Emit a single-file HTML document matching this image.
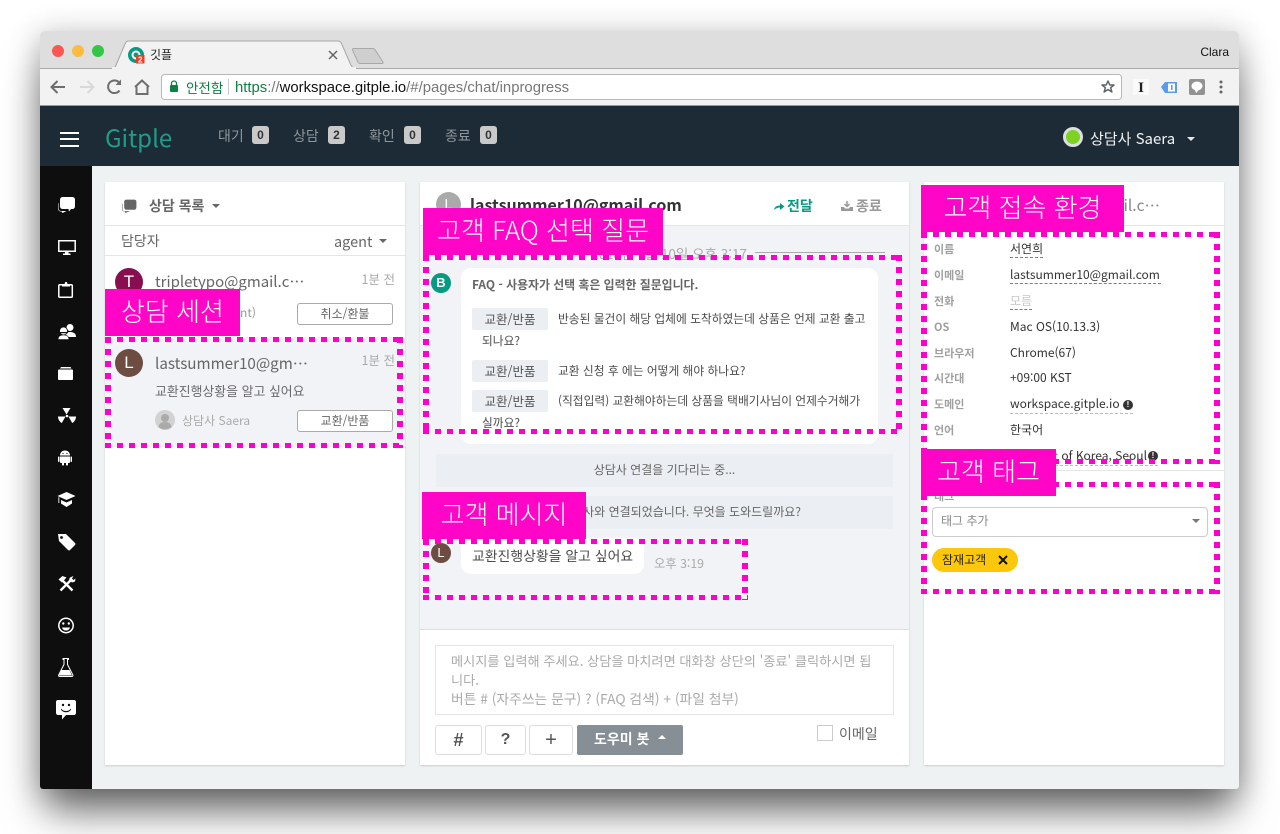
<!DOCTYPE html>
<html lang="ko"><head><meta charset="utf-8"><title>깃플</title>
<style>
html,body{margin:0;padding:0;width:1280px;height:834px;overflow:hidden;background:#fff}
body{position:relative;font-family:"Noto Sans CJK KR","Liberation Sans",sans-serif;color:#555}
.a,.t,svg.a{position:absolute}
.t{white-space:nowrap;height:20px;line-height:20px;font-size:12px}
.c{text-align:center}
.win{position:absolute;left:40px;top:31px;width:1199px;height:758px;border-radius:5px 5px 3px 3px;background:#eef2f3;box-shadow:0 28px 38px -6px rgba(0,0,0,.55),0 4px 30px 2px rgba(0,0,0,.22)}
.panel{position:absolute;top:182px;height:583px;background:#fff;box-shadow:0 1px 2px rgba(0,0,0,.16)}
.bd{position:absolute;background:#e3e5e7;height:1px}
.badge{position:absolute;top:126px;width:17px;height:18px;border-radius:3px;background:#c9c9c9;color:#333;font:700 12px/18px "Liberation Sans",sans-serif;text-align:center}
.nav{color:#90979c;font-size:14px}
.btn{position:absolute;box-sizing:border-box;background:#fff;border:1px solid #aaa;border-radius:3px;font-size:12px;text-align:center;color:#666;width:96px;height:22px;left:297px;line-height:19px}
.chip{position:absolute;left:472px;width:76px;height:22px;background:#ebeef2;border-radius:2px;font-size:12.500px;line-height:22px;text-align:center;color:#555}
.f{font-size:11.750px;color:#4c4c4c}
.sys{position:absolute;left:436px;width:457px;height:33px;background:#ebeef2;font-size:12px;line-height:32px;text-align:center;color:#666}
.av{position:absolute;border-radius:50%;color:#fff;text-align:center;font-family:"Liberation Sans",sans-serif}
.k{left:934px;font-weight:700;color:#a0a0a0;font-size:11px}
.v{left:1010px;color:#333}
.u{position:absolute;left:1010px;height:0;border-bottom:1px dashed #3b8dd6}
.tb{position:absolute;box-sizing:border-box;top:725px;height:30px;border:1px solid #ddd;border-radius:3px;background:#fff;text-align:center;color:#555;font:700 16px/28px "Liberation Sans",sans-serif}
.d{position:absolute;z-index:5;background:
repeating-linear-gradient(90deg,#f0c 0 6px,transparent 6px 12px) left top/100% 5px no-repeat,
repeating-linear-gradient(90deg,#f0c 0 6px,transparent 6px 12px) left bottom/100% 5px no-repeat,
repeating-linear-gradient(180deg,#f0c 0 6px,transparent 6px 12px) left top/6px 100% no-repeat,
repeating-linear-gradient(180deg,#f0c 0 6px,transparent 6px 12px) right top/6px 100% no-repeat}
.l{position:absolute;z-index:6;height:47px;background:#ff05c8;color:#fff;font-size:26px;line-height:44px;text-align:center;font-weight:300;white-space:nowrap}
</style></head><body>
<div class="win"></div>

<!-- Browser chrome -->
<div class="a" style="left:40px;top:31px;width:1199px;height:38px;background:#dedede;border-radius:5px 5px 0 0;border-bottom:1px solid #a9a9a9;box-sizing:border-box"></div>
<div class="a" style="left:40px;top:69px;width:1199px;height:37px;background:#f2f2f2;border-bottom:1px solid #9a9a9a;box-sizing:border-box"></div>
<svg class="a" style="left:0;top:0" width="1280" height="110" viewBox="0 0 1280 110">
<circle cx="58" cy="51" r="6" fill="#fc5753"/><circle cx="78" cy="51" r="6" fill="#fdbc40"/><circle cx="98" cy="51" r="6" fill="#33c748"/>
<path d="M112 68.500c2 0 3-1 3.700-2.500L125 44c.7-2 1.500-3 3.500-3H338c2 0 3 1 3.700 3L350 63c1 3 3 5.500 6 5.500" fill="#f2f2f2" stroke="#a5a5a5"/>
<rect x="112" y="67" width="244" height="3" fill="#f2f2f2"/>
<path d="M354 48.500h19c1 0 1.500.5 2 1.200l8 12.300c.5.800 0 1.500-1 1.500h-22c-1 0-1.500-.4-2-1.200l-5.500-12.300c-.4-.9 0-1.500 1.500-1.500z" fill="#cfcfcf" stroke="#a9a9a9"/>
<circle cx="136" cy="55" r="8" fill="#079a82"/><circle cx="136" cy="55" r="3.500" fill="none" stroke="#fff" stroke-width="2"/>
<rect x="136" y="55" width="8.500" height="8.500" fill="#e8402a"/><text x="140.200" y="62.500" font-family="Liberation Sans" font-size="8" font-weight="700" fill="#fff" text-anchor="middle">2</text>
<path d="M329 51l8 8m0-8l-8 8" stroke="#666" stroke-width="1.500" fill="none"/>
<g fill="none" stroke="#6e6e6e" stroke-width="2"><path d="M65 87H52m5.500-6l-6 6 6 6"/>
<path d="M80 87h13m-5.500-6l6 6-6 6" stroke="#d9d9d9"/>
<path d="M119.500 90.500a6.300 6.300 0 1 1 .6-6.500"/><path d="M121 79.500v5.500h-5.500z" fill="#6e6e6e" stroke="none"/>
<path d="M135 87l7-6.500 7 6.500m-12.500-.5V94h11v-7.500" /></g>
<rect x="161.500" y="74.500" width="960" height="25" rx="3" fill="#fff" stroke="#b8b8b8"/>
<rect x="170" y="85" width="8" height="7" rx="1" fill="#0b8043"/><path d="M171.500 85v-1.500a2.500 2.500 0 0 1 5 0V85" fill="none" stroke="#0b8043" stroke-width="1.300"/>
<rect x="228" y="79" width="1" height="16" fill="#c8c8c8"/>
<path d="M1108 81l1.800 4h4.200l-3.400 2.700 1.300 4.300-3.900-2.500-3.900 2.500 1.300-4.300-3.400-2.700h4.200z" fill="none" stroke="#5f6368" stroke-width="1.500" stroke-linejoin="round"/>
<rect x="1133" y="79" width="16" height="16" fill="#fafafa"/>
<text x="1141" y="92" font-family="Liberation Serif" font-size="15" font-weight="700" fill="#222" text-anchor="middle">I</text>
<path d="M1161 87l4-5h12v11h-12z" fill="#5a9bf0"/><rect x="1168" y="83.500" width="7" height="8" fill="#fff"/><rect x="1171" y="85" width="1.500" height="5" fill="#5a9bf0"/>
<rect x="1189" y="79" width="16" height="16" rx="2" fill="#929292"/><ellipse cx="1197" cy="86" rx="5.500" ry="4.500" fill="#fff"/><path d="M1195 90l1 3 3-3z" fill="#fff"/>
<g fill="#666"><circle cx="1221" cy="82" r="1.500"/><circle cx="1221" cy="87" r="1.500"/><circle cx="1221" cy="92" r="1.500"/></g>
</svg>
<div class="t" style="left:150px;top:45px;font-size:12px;color:#222">깃플</div>
<div class="t" style="right:51px;top:42px;font:12px/20px 'Liberation Sans',sans-serif;color:#111">Clara</div>
<div class="t" style="left:186px;top:77px;font-size:13.500px;color:#0b8043">안전함</div>
<div class="t" style="left:235px;top:78px;font:14.880px/20px 'Liberation Sans',sans-serif;color:#777"><span style="color:#0b8043">https</span>://<span style="color:#111">workspace.gitple.io</span>/#/pages/chat/inprogress</div>

<!-- App header -->
<div class="a" style="left:40px;top:106px;width:1199px;height:60px;background:#1c2b36"></div>
<div class="a" style="left:60px;top:132px;width:19px;height:2px;background:#fff"></div>
<div class="a" style="left:60px;top:138px;width:19px;height:2px;background:#fff"></div>
<div class="a" style="left:60px;top:145px;width:19px;height:2px;background:#fff"></div>
<div class="t" style="left:105px;top:122px;height:30px;line-height:30px;font-size:24px;color:#1f9c8a;font-weight:400">Gitple</div>
<div class="t nav" style="left:218px;top:126px">대기</div><div class="badge" style="left:252px">0</div>
<div class="t nav" style="left:293px;top:126px">상담</div><div class="badge" style="left:328px">2</div>
<div class="t nav" style="left:369px;top:126px">확인</div><div class="badge" style="left:404px">0</div>
<div class="t nav" style="left:445px;top:126px">종료</div><div class="badge" style="left:480px">0</div>
<div class="a" style="left:1063px;top:127px;width:20px;height:20px;box-sizing:border-box;border-radius:50%;background:#7ed321;border:3px solid #dcdfe0"></div>
<div class="t" style="left:1090px;top:129px;font-size:15px;color:#f2f2f2">상담사 Saera</div>
<div class="a" style="left:1187px;top:137px;border:4px solid transparent;border-top:4px solid #e8e8e8"></div>

<!-- Sidebar -->
<div class="a" style="left:40px;top:166px;width:52px;height:623px;background:#0e0e0e;border-radius:0 0 0 3px"></div>
<svg class="a" style="left:40px;top:166px" width="52" height="623" viewBox="0 0 52 623" fill="#fff">
<path d="M23 31h9c2 0 3 1 3 3v6c0 2-1 3-3 3h-1l-2 2.500-.5-2.500H23c-2 0-3-1-3-3v-6c0-2 1-3 3-3z"/><path d="M18.500 37v5c0 2 1 3 3 3h5l-4 2-1-1.500c-2 0-3.500-1-3.500-3v-4c0-1 0-1.500.5-1.500z"/>
<path d="M18.800 74.800h16.400v10.400H18.800z" fill="none" stroke="#fff" stroke-width="1.500"/><path d="M25 86h3.500v1.500h2V89h-7.500v-1.500h2z"/>
<rect x="18.800" y="118.800" width="13.500" height="12.500" rx="1" fill="none" stroke="#fff" stroke-width="1.500"/><path d="M22 118h2.500l.8-2h1.500l.8 2H30v2.500h-8z"/>
<circle cx="30" cy="161.500" r="3.500"/><path d="M25 171c0-4 2-5 5-5s6 1 6 5z"/><circle cx="23.500" cy="165" r="4" stroke="#0e0e0e" stroke-width=".8"/><path d="M19 166h9v1.200h-9z" fill="#0e0e0e"/><path d="M18 173.500c0-3.500 2.500-4.500 5.500-4.500s5.500 1 5.500 4.500z" stroke="#0e0e0e" stroke-width=".6"/>
<path d="M21 201h9.500l1 1.500H20z"/><path d="M19 203.500h13c.6 0 1 .4 1 1v8.500c0 .6-.4 1-1 1H19c-.6 0-1-.4-1-1v-8.500c0-.6.4-1 1-1z"/>
<path d="M22.500 242h8l-4 6.500z"/><path d="M18 250.500h7.500l-3.700 6.500c-2.300-1.300-3.800-3.700-3.800-6.500z"/><path d="M36 250.500h-7.500l3.700 6.500c2.300-1.300 3.800-3.700 3.800-6.500z"/><circle cx="27" cy="250" r="1.300"/>
<path d="M20 289.500c0-3 2.200-5 5-5s5 2 5 5z"/><path d="M20 290.500h10v5.500c0 .6-.4 1-1 1h-8c-.6 0-1-.4-1-1z"/><rect x="18" y="290.500" width="1.500" height="5.500" rx=".7"/><rect x="30.500" y="290.500" width="1.500" height="5.500" rx=".7"/><rect x="22" y="296" width="2" height="3.500" rx=".8"/><rect x="26" y="296" width="2" height="3.500" rx=".8"/><circle cx="23" cy="287.500" r=".6" fill="#0e0e0e"/><circle cx="27" cy="287.500" r=".6" fill="#0e0e0e"/>
<path d="M26.500 326l9 4-9 4-9-4z"/><path d="M21 334v3.500l5.500 3.500 5.500-3.500V334l-5.500 2.500z"/><path d="M18 331l1.500.6V337H18z" fill="#999"/>
<path d="M18 368h8l9 9c.6.6.6 1.300 0 2l-5 5c-.7.6-1.400.6-2 0l-9-9z"/><circle cx="21.500" cy="371.500" r="1.400" fill="#0e0e0e"/>
<path d="M20.500 424.500L32 413M21.500 413.500l11 11" stroke="#fff" stroke-width="2.300" fill="none"/><path d="M18.500 413.500l4-3.500 4 1.500-4.500 5z"/><path d="M30 411.500l3.500-1.500-1.500 2.500 1.500 1.500 2-1.500-.5 3-3 1-3-3z"/>
<circle cx="26" cy="459.500" r="7.200" fill="none" stroke="#fff" stroke-width="1.500"/><circle cx="23.300" cy="457.500" r="1.200"/><circle cx="28.800" cy="457.500" r="1.200"/><path d="M22 461.500h8c-.6 2-2 3-4 3s-3.400-1-4-3z"/>
<path d="M23 492.500h5.500v1h-1v5l5.300 10.300c.4 1 0 1.700-1 1.700H19.700c-1 0-1.400-.7-1-1.700l5.300-10.300v-5h-1z" fill="none" stroke="#fff" stroke-width="1"/><path d="M21.500 504h8l2.500 5.500H19z"/>
<path d="M18 534h16c1 0 2 .8 2 2v11c0 1-1 2-2 2H26l-4 4.500V549h-4c-1 0-2-1-2-2v-11c0-1.200 1-2 2-2z"/><g fill="#0e0e0e"><circle cx="23" cy="539" r="1.200"/><circle cx="29" cy="539" r="1.200"/><path d="M21 542.500c1 1.500 3 2.500 5 2.500s4-1 5-2.500v1.300c-1 1.500-3 2.500-5 2.500s-4-1-5-2.500z"/></g>
</svg>

<!-- Left panel -->
<div class="panel" style="left:105px;width:300px"></div>
<div class="bd" style="left:105px;top:225px;width:300px"></div>
<div class="bd" style="left:105px;top:255px;width:300px"></div>
<svg class="a" style="left:121px;top:198px" width="17" height="16" viewBox="0 0 16 14" fill="#666"><path d="M5 1h7.500c1 0 2 .6 2 2v5c0 1.500-1 2.500-2 2.500H5c-1 0-2-1-2-2.500V3c0-1.400 1-2 2-2z"/><path d="M1.500 4.500V10c0 1.200.8 1.800 2 1.800H9L4 13.500l-.5-1.500C1.500 12 1 11 1 10V5.500z"/></svg>
<div class="t" style="left:149px;top:196px;font-size:14px;font-weight:700;color:#666">상담 목록</div>
<div class="a" style="left:212px;top:204px;border:4px solid transparent;border-top:4px solid #666"></div>
<div class="t" style="left:121px;top:231px;font-size:14px;color:#666">담당자</div>
<div class="t" style="left:334px;top:232px;font-size:14.500px;color:#666">agent</div>
<div class="a" style="left:379px;top:239px;border:4px solid transparent;border-top:4px solid #666"></div>

<div class="av" style="left:115px;top:268px;width:28px;height:28px;background:#880e4f;font-size:17px;line-height:28px">T</div>
<div class="t" style="left:155px;top:272px;font-size:15px;color:#666">tripletypo@gmail.c⋯</div>
<div class="t" style="right:885px;top:269px;color:#aaa;font-size:12.500px">1분 전</div>
<div class="t" style="left:240px;top:303px;color:#999;font-size:12px">nt)</div>
<div class="btn" style="top:303px">취소/환불</div>

<div class="a" style="left:105px;top:337px;width:300px;height:110px;background:#f1f3f7"></div>
<div class="av" style="left:115px;top:349px;width:28px;height:28px;background:#6d4c41;font-size:17px;line-height:28px">L</div>
<div class="t" style="left:155px;top:353px;font-size:15.200px;color:#666">lastsummer10@gm⋯</div>
<div class="t" style="right:885px;top:350px;color:#aaa;font-size:12.500px">1분 전</div>
<div class="t" style="left:155px;top:381px;font-size:12.900px;color:#6a6a6a">교환진행상황을 알고 싶어요</div>
<svg class="a" style="left:155px;top:410px" width="20" height="20"><circle cx="10" cy="10" r="10" fill="#d2d2d2"/><circle cx="10" cy="8" r="4" fill="#aaa"/><path d="M3.500 17c.5-3.500 3-5 6.500-5s6 1.500 6.500 5a10 10 0 0 1-13 0z" fill="#aaa"/></svg>
<div class="t" style="left:182px;top:411px;font-size:12px;color:#aaa">상담사 Saera</div>
<div class="btn" style="top:410px">교환/반품</div>

<!-- Center panel -->
<div class="panel" style="left:420px;width:489px"></div>
<div class="a" style="left:420px;top:226px;width:489px;height:403px;background:#f1f3f7"></div>
<div class="bd" style="left:420px;top:225px;width:489px"></div>
<div class="bd" style="left:420px;top:629px;width:489px;background:#dcdfe2"></div>
<div class="av" style="left:436px;top:192px;width:25px;height:25px;background:#aaa;font-size:15px;line-height:25px">L</div>
<div class="t" style="left:470px;top:194px;font-size:16px;font-weight:700;color:#333">lastsummer10@gmail.com</div>
<svg class="a" style="left:773px;top:201px" width="12" height="10"><path d="M1 9c.5-3 2.500-4.500 6-4.500V2l4.500 3.500L7 9V6.500C4.500 6.500 2.500 7.500 1 9z" fill="#079a82"/></svg>
<div class="t" style="left:787px;top:196px;font-size:14px;font-weight:700;color:#079a82">전달</div>
<svg class="a" style="left:841px;top:200px" width="12" height="12"><path d="M6 1v5M3.500 4L6 6.500 8.500 4" stroke="#999" stroke-width="1.500" fill="none"/><path d="M0 7h3l1 1.500h4L9 7h3v4H0z" fill="#999"/></svg>
<div class="t" style="left:856px;top:196px;font-size:14px;font-weight:700;color:#999">종료</div>
<div class="t" style="right:533px;top:243px;font-size:13.500px;color:#aaa">2018년 7월 10일 오후 3:17</div>
<div class="a" style="left:755px;top:252px;width:130px;height:1px;background:#aaa"></div>

<div class="av" style="left:431px;top:273px;width:20px;height:20px;background:#079a82;font-size:13px;line-height:20px;font-weight:700">B</div>
<div class="a" style="left:461px;top:268px;width:417px;height:176px;background:#fff;border-radius:10px"></div>
<div class="t" style="left:472px;top:275px;font-size:11.900px;font-weight:700;color:#666">FAQ - 사용자가 선택 혹은 입력한 질문입니다.</div>
<div class="chip" style="top:308px">교환/반품</div>
<div class="t f" style="left:558px;top:309px">반송된 물건이 해당 업체에 도착하였는데 상품은 언제 교환 출고</div>
<div class="t f" style="left:482px;top:331px">되나요?</div>
<div class="chip" style="top:360px">교환/반품</div>
<div class="t f" style="left:558px;top:361px">교환 신청 후 에는 어떻게 해야 하나요?</div>
<div class="chip" style="top:390px">교환/반품</div>
<div class="t f" style="left:558px;top:391px">(직접입력) 교환해야하는데 상품을 택배기사님이 언제수거해가</div>
<div class="t f" style="left:482px;top:413px">실까요?</div>

<div class="sys" style="top:454px">상담사 연결을 기다리는 중...</div>
<div class="sys" style="top:496px;text-align:right;padding-right:92px;box-sizing:border-box">상담사와 연결되었습니다. 무엇을 도와드릴까요?</div>

<div class="av" style="left:431px;top:543px;width:20px;height:20px;background:#6d4c41;font-size:13px;line-height:20px">L</div>
<div class="a" style="left:461px;top:538px;width:183px;height:36px;background:#fff;border-radius:10px"></div>
<div class="t" style="left:472px;top:546px;font-size:13.900px;color:#4c4c4c">교환진행상황을 알고 싶어요</div>
<div class="t" style="left:654px;top:553px;font-size:12.300px;color:#aaa">오후 3:19</div>

<div class="a" style="left:435px;top:645px;width:459px;height:70px;box-sizing:border-box;border:1px solid #e6e6e6;background:#fff"></div>
<div class="a" style="left:451px;top:651px;white-space:nowrap;font-size:13.200px;line-height:19px;color:#aaa">메시지를 입력해 주세요. 상담을 마치려면 대화창 상단의 '종료' 클릭하시면 됩<br>니다.<br><span style="font-size:13.800px">버튼 # (자주쓰는 문구) ? (FAQ 검색) + (파일 첨부)</span></div>
<div class="tb" style="left:435px;width:47px;font-size:18px">#</div>
<div class="tb" style="left:485px;width:41px">?</div>
<div class="tb" style="left:529px;width:44px;font-size:20px;font-weight:400">+</div>
<div class="a" style="left:577px;top:725px;width:106px;height:30px;background:#868e96;border-radius:2px;color:#fff;font-size:14px;font-weight:700;line-height:29px;padding-left:17px;box-sizing:border-box;white-space:nowrap">도우미 봇</div>
<div class="a" style="left:658px;top:729px;border:4px solid transparent;border-bottom:4px solid #fff;margin-top:2px"></div>
<div class="a" style="left:817px;top:725px;width:16px;height:16px;box-sizing:border-box;border:1px solid #ccc;background:#fff"></div>
<div class="t" style="left:839px;top:724px;font-size:14px;color:#666">이메일</div>

<!-- Right panel -->
<div class="panel" style="left:924px;width:300px"></div>
<div class="bd" style="left:924px;top:225px;width:300px"></div>
<div class="t" style="left:1030px;top:195px;width:130px;text-align:right;font-size:15.500px;color:#888">il.c⋯</div>
<div class="t k" style="top:239px">이름</div><div class="t v" style="top:239px">서연희</div><div class="u" style="top:257px;width:33px"></div>
<div class="t k" style="top:265px">이메일</div><div class="t v" style="top:265px">lastsummer10@gmail.com</div><div class="u" style="top:283px;width:151px"></div>
<div class="t k" style="top:291px">전화</div><div class="t v" style="top:291px;color:#c8c8c8">모름</div><div class="u" style="top:309px;width:22px"></div>
<div class="t k" style="top:317px">OS</div><div class="t v" style="top:317px">Mac OS(10.13.3)</div>
<div class="t k" style="top:343px">브라우저</div><div class="t v" style="top:343px">Chrome(67)</div>
<div class="t k" style="top:368px">시간대</div><div class="t v" style="top:368px">+09:00 KST</div>
<div class="t k" style="top:394px">도메인</div><div class="t v" style="top:394px">workspace.gitple.io</div><div class="u" style="top:413px;width:123px;border-color:#bbb"></div>
<div class="av" style="left:1123px;top:400px;width:10px;height:10px;background:#333;font:700 8px/10px 'Liberation Sans',sans-serif">!</div>
<div class="t k" style="top:420px">언어</div><div class="t v" style="top:420px">한국어</div>
<div class="t" style="right:133px;top:446px;color:#333">Republic of Korea, Seoul</div>
<div class="av" style="left:1148px;top:451px;width:10px;height:10px;background:#333;font:700 8px/10px 'Liberation Sans',sans-serif">!</div>
<div class="u" style="top:465px;left:1040px;width:118px;border-color:#bbb"></div>
<div class="bd" style="left:924px;top:470px;width:300px"></div>
<div class="t k" style="top:486px">태그</div>
<div class="a" style="left:932px;top:507px;width:276px;height:30px;box-sizing:border-box;border:1px solid #ccc;border-radius:4px;background:#fff"></div>
<div class="t" style="left:941px;top:511px;color:#888">태그 추가</div>
<div class="a" style="left:1192px;top:519px;border:4px solid transparent;border-top:4px solid #777"></div>
<div class="a" style="left:932px;top:548px;width:86px;height:24px;border-radius:12px;background:#fdc70c"></div>
<div class="t" style="left:942px;top:550px;color:#222;font-size:12px">잠재고객</div>
<svg class="a" style="left:998px;top:555px" width="10" height="10"><path d="M1 1l8 8m0-8l-8 8" stroke="#111" stroke-width="2"/></svg>

<!-- Annotation overlays -->
<div class="d" style="left:105px;top:337px;width:298px;height:111px"></div>
<div class="d" style="left:423px;top:255px;width:479px;height:179px"></div>
<div class="d" style="left:423px;top:539px;width:325px;height:61px"></div>
<div class="d" style="left:921px;top:232px;width:299px;height:232px"></div>
<div class="d" style="left:921px;top:482px;width:299px;height:112px"></div>
<div class="l" style="left:105px;top:289px;width:135px">상담 세션</div>
<div class="l" style="left:423px;top:208px;width:240px">고객 FAQ 선택 질문</div>
<div class="l" style="left:921px;top:185px;width:203px">고객 접속 환경</div>
<div class="l" style="left:921px;top:449px;width:135px">고객 태그</div>
<div class="l" style="left:422px;top:492px;width:164px">고객 메시지</div>
</body></html>
